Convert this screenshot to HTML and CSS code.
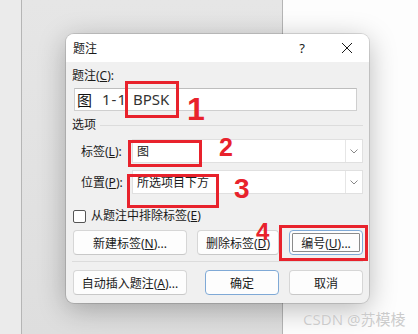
FILE: index.html
```html
<!DOCTYPE html>
<html lang="zh-CN">
<head>
  <meta charset="UTF-8" />
  <title>题注</title>
  <link rel="stylesheet" href="styles.css">
</head>
<body>

  <div class="desk">
    <div class="gutter"></div>
    <div class="rule"></div>
    <div class="page"></div>
    <div class="rule"></div>
    <div class="doc"></div>
  </div>

  <div class="dialog">
    <div class="titlebar">
      <span class="title">题注</span>
      <span class="help">?</span>
      <span class="close">
        <svg width="12" height="12" viewBox="0 0 12 12"><path d="M1 1 L11 11 M11 1 L1 11" stroke="#1a1a1a" stroke-width="1" fill="none"/></svg>
      </span>
    </div>

    <div class="body">
      <div class="lbl">题注(<u>C</u>):</div>
      <div class="caption-input"><span class="fig">图</span><span class="num-part">1-1</span><span>BPSK</span></div>

      <div class="group">
        <span>选项</span>
        <span class="line"></span>
      </div>

      <div class="field">
        <span class="field-lbl">标签(<u>L</u>):</span>
        <div class="combo">
          <span class="combo-text">图</span>
          <span class="combo-btn"><svg width="8" height="5" viewBox="0 0 8 5"><path d="M0.5 0.5 L4 4 L7.5 0.5" stroke="#888" fill="none"/></svg></span>
        </div>
      </div>

      <div class="field">
        <span class="field-lbl">位置(<u>P</u>):</span>
        <div class="combo">
          <span class="combo-text">所选项目下方</span>
          <span class="combo-btn"><svg width="8" height="5" viewBox="0 0 8 5"><path d="M0.5 0.5 L4 4 L7.5 0.5" stroke="#888" fill="none"/></svg></span>
        </div>
      </div>

      <label class="check">
        <span class="box"></span>
        <span>从题注中排除标签(<u>E</u>)</span>
      </label>

      <div class="btn-row">
        <button class="btn wide">新建标签(<u>N</u>)...</button>
        <button class="btn mid">删除标签(<u>D</u>)</button>
        <button class="btn focus">编号(<u>U</u>)...</button>
      </div>

      <div class="sep"></div>

      <div class="btn-row">
        <button class="btn wide">自动插入题注(<u>A</u>)...</button>
        <button class="btn default push">确定</button>
        <button class="btn">取消</button>
      </div>
    </div>
  </div>

  <!-- annotations drawn on top of the screenshot -->
  <div class="mark m1"></div>
  <div class="num n1">1</div>
  <div class="mark m2"></div>
  <div class="num n2">2</div>
  <div class="mark m3"></div>
  <div class="num n3">3</div>
  <div class="mark m4"></div>
  <div class="num n4">4</div>

  <div class="watermark">CSDN @苏模棱</div>

</body>
</html>
```

FILE: styles.css
```css
html, body {
  margin: 0;
  padding: 0;
}

body {
  width: 418px;
  height: 334px;
  overflow: hidden;
  position: relative;
  font-family: "Noto Sans", "Noto Sans CJK SC", sans-serif;
  font-size: 12px;
  color: #1a1a1a;
}

.desk {
  display: flex;
  height: 334px;
}

.gutter {
  width: 21px;
  background: #ebebeb;
}

.rule {
  width: 1px;
  background: #b5b5b5;
}

.page {
  width: 260px;
  background: linear-gradient(#e6e6e6, #dedede);
}

.doc {
  flex: 1;
  background: #fdfdfd;
}

.dialog {
  position: absolute;
  left: 66px;
  top: 34px;
  width: 303px;
  border-radius: 8px;
  overflow: hidden;
  background: #f0f0f0;
  box-shadow: 0 6px 28px rgba(0, 0, 0, 0.28), 0 0 0 1px rgba(0, 0, 0, 0.12);
}

.titlebar {
  height: 28px;
  background: #fff;
  display: flex;
  align-items: center;
  padding-left: 7px;
}

.title {
  flex: 1;
  font-size: 12px;
}

.help {
  width: 44px;
  text-align: center;
  font-size: 13px;
}

.close {
  width: 45px;
  display: flex;
  justify-content: center;
}

.body {
  padding: 6px 6px 8px 6px;
  display: flex;
  flex-direction: column;
}

.lbl {
  line-height: 16px;
}

.caption-input {
  margin: 4px 6px 0 2px;
  height: 23px;
  box-sizing: border-box;
  background: #fff;
  border: 1px solid #cfcfcf;
  border-top-color: #bdbdbd;
  font-size: 15px;
  line-height: 21px;
  padding-left: 2px;
  color: #333;
  display: flex;
}

.fig {
  font-family: "Noto Sans CJK SC", sans-serif;
  color: #111;
  margin-right: 10px;
}

.num-part {
  letter-spacing: 1px;
  margin-right: 6px;
}

.group {
  display: flex;
  align-items: center;
  gap: 4px;
  margin-top: 6px;
  line-height: 16px;
}

.group .line {
  flex: 1;
  height: 1px;
  background: #dcdcdc;
}

.field {
  display: flex;
  align-items: center;
  margin-top: 6px;
  padding-left: 9px;
}

.field + .field {
  margin-top: 7px;
}

.field-lbl {
  width: 51px;
}

.combo {
  flex: 1;
  height: 24px;
  box-sizing: border-box;
  background: #fff;
  border: 1px solid #e0e0e0;
  display: flex;
  align-items: center;
}

.combo-text {
  flex: 1;
  padding-left: 4px;
}

.combo-btn {
  width: 16px;
  height: 100%;
  border-left: 1px solid #e6e6e6;
  display: flex;
  align-items: center;
  justify-content: center;
}

.check {
  display: flex;
  align-items: center;
  gap: 5px;
  margin-top: 14px;
  margin-left: 1px;
  line-height: 16px;
}

.check .box {
  width: 11px;
  height: 11px;
  border: 1px solid #555;
  border-radius: 2px;
  background: #fff;
}

.btn-row {
  display: flex;
  gap: 10px;
  margin-top: 6px;
  margin-left: 1px;
}

.btn {
  height: 25px;
  width: 74px;
  box-sizing: border-box;
  padding: 0;
  background: #fdfdfd;
  border: 1px solid #d6d6d6;
  border-bottom-color: #c8c8c8;
  border-radius: 4px;
  font-family: inherit;
  font-size: 12px;
  color: #1a1a1a;
}

.btn.wide {
  width: 114px;
}

.btn.mid {
  width: 82px;
}

.btn.push {
  margin-left: auto;
}

.btn.default {
  border-color: #7fa9d6;
}

.btn.focus {
  border-color: #7fa9d6;
  outline: 1px solid #8a8a8a;
  outline-offset: -4px;
}

.sep {
  height: 1px;
  background: #dcdcdc;
  margin-top: 6px;
}

.sep + .btn-row {
  margin-top: 8px;
}

.mark {
  position: absolute;
  border: 3px solid #e8222c;
  box-sizing: border-box;
}

.m1 { left: 125px; top: 81px; width: 54px; height: 37px; }
.m2 { left: 128px; top: 140px; width: 74px; height: 27px; }
.m3 { left: 127px; top: 174px; width: 92px; height: 34px; }
.m4 { left: 279px; top: 225px; width: 89px; height: 36px; }

.num {
  position: absolute;
  font-family: "Liberation Sans", sans-serif;
  font-weight: 700;
  color: #e8222c;
  line-height: 0.8;
}

.n1 { left: 187px; top: 97px; font-size: 32px; }
.n2 { left: 219px; top: 137px; font-size: 25px; }
.n3 { left: 234px; top: 178px; font-size: 28px; }
.n4 { left: 256px; top: 222px; font-size: 24px; }

.watermark {
  position: absolute;
  left: 303px;
  top: 308px;
  font-size: 15px;
  color: #cbcbcb;
  text-shadow: 0 0 1px #fff;
}
```
